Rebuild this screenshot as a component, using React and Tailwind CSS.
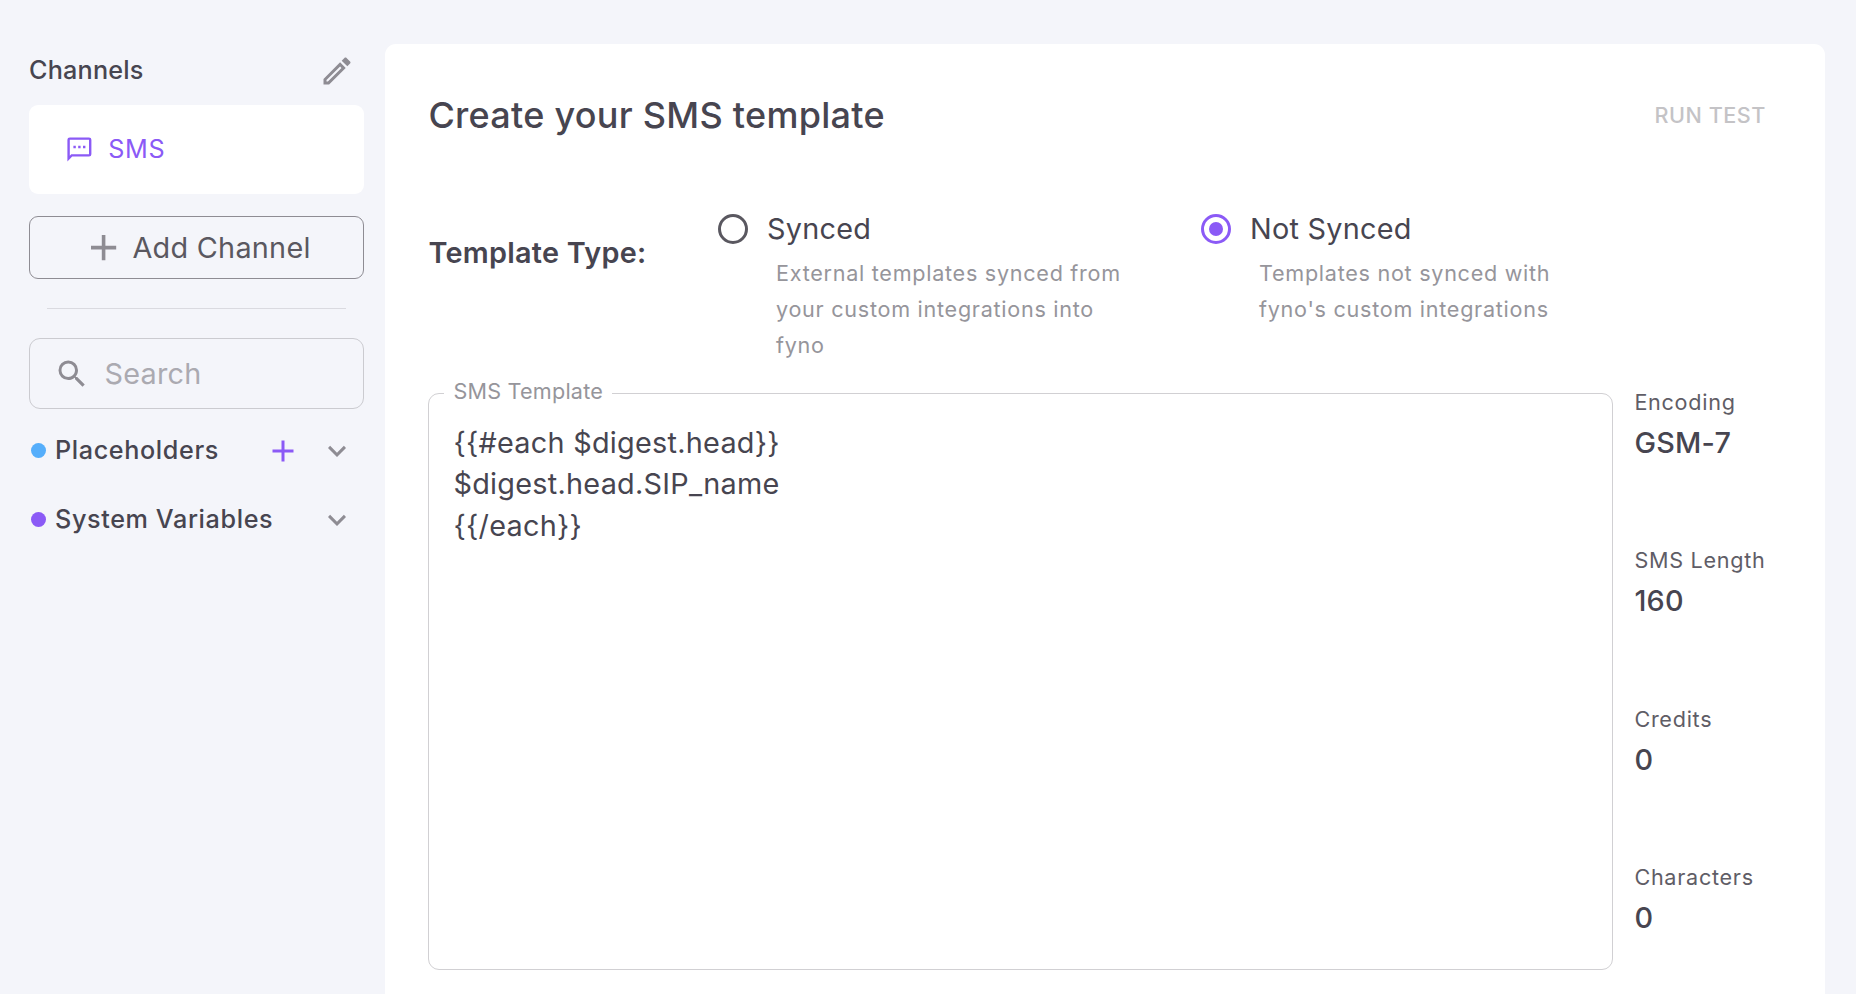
const ICONS = {
  pencil:
    "M14.06,9L15,9.94L5.92,19H5V18.08L14.06,9M17.66,3C17.41,3 17.15,3.1 16.96,3.29L15.13,5.12L18.88,8.87L20.71,7.04C21.1,6.65 21.1,6 20.71,5.63L18.37,3.29C18.17,3.09 17.92,3 17.66,3M14.06,6.19L3,17.25V21H6.75L17.81,9.94L14.06,6.19Z",
  sms: "M20,2H4A2,2 0 0,0 2,4V22L6,18H20A2,2 0 0,0 22,16V4A2,2 0 0,0 20,2M20,16H5.2L4,17.2V4H20V16M17,11H15V9H17M13,11H11V9H13M9,11H7V9H9",
  plus: "M19,13H13V19H11V13H5V11H11V5H13V11H19V13Z",
  search:
    "M9.5,3A6.5,6.5 0 0,1 16,9.5C16,11.11 15.41,12.59 14.44,13.73L14.71,14H15.5L20.5,19L19,20.5L14,15.5V14.71L13.73,14.44C12.59,15.41 11.11,16 9.5,16A6.5,6.5 0 0,1 3,9.5A6.5,6.5 0 0,1 9.5,3M9.5,5C7,5 5,7 5,9.5C5,12 7,14 9.5,14C12,14 14,12 14,9.5C14,7 12,5 9.5,5Z",
  chevron: "M7.41,8.58L12,13.17L16.59,8.58L18,10L12,16L6,10L7.41,8.58Z",
};

const METRICS = [
  ["Encoding", "GSM-7"],
  ["SMS Length", "160"],
  ["Credits", "0"],
  ["Characters", "0"],
];

const MESSAGE = "{{#each $digest.head}}\n$digest.head.SIP_name\n{{/each}}";

function Icon({ name, className }) {
  return (
    <svg viewBox="0 0 24 24" fill="currentColor" className={`shrink-0 ${className}`} aria-hidden="true">
      <path d={ICONS[name]} />
    </svg>
  );
}

function VariableGroup({ label, dot, canAdd }) {
  return (
    <div className="flex h-[69px] items-center pr-[9px] pl-[2px]">
      <span className={`size-[15px] shrink-0 rounded-full ${dot}`} />
      <span className="ml-[9px] flex-1 pb-[2px] text-[25.2px] leading-9 font-medium tracking-[0.62px] whitespace-nowrap text-[#474550]">
        {label}
      </span>
      {canAdd && <Icon name="plus" className="mr-[18px] size-9 text-[#8B5AF6]" />}
      <Icon name="chevron" className="size-9 text-[#8E8C93]" />
    </div>
  );
}

function Sidebar() {
  return (
    <aside className="flex w-[385px] shrink-0 flex-col pt-[53px] pr-[21px] pl-[29px]">
      <div className="flex h-9 items-center justify-between pr-[9px]">
        <h2 className="pb-[3px] text-[25.2px] leading-8 font-medium tracking-[0.2px] text-[#474550]">Channels</h2>
        <Icon name="pencil" className="size-9 text-[#8E8C93]" />
      </div>

      <div className="mt-4 flex h-[89px] items-center gap-[14.4px] rounded-[9px] bg-white pl-9 text-[#8B5AF6]">
        <Icon name="sms" className="size-[28.8px]" />
        <span className="pb-[2px] text-[25.2px] leading-9 tracking-[0.72px]">SMS</span>
      </div>

      <button className="mt-[22px] flex h-[63px] items-center justify-center gap-[7px] rounded-[9px] border border-[#8E8C93]">
        <Icon name="plus" className="size-[43.2px] text-[#8E8C93]" />
        <span className="text-[28.8px] leading-10 tracking-[0.27px] text-[#5A5860]">Add Channel</span>
      </button>

      <div className="mx-[18px] mt-[29px] h-px shrink-0 bg-[#DADAE0]" />

      <div className="mt-[29px] flex h-[71px] items-center gap-[14.4px] rounded-[11px] border border-[#CBCBD0] pl-6">
        <Icon name="search" className="size-9 text-[#8E8C93]" />
        <span className="text-[28.8px] leading-10 tracking-[0.27px] text-[#ABAAB1]">Search</span>
      </div>

      <div className="mt-[7px]">
        <VariableGroup label="Placeholders" dot="bg-[#55AEFB]" canAdd />
        <VariableGroup label="System Variables" dot="bg-[#8B5AF6]" />
      </div>
    </aside>
  );
}

function RadioOption({ label, description, checked }) {
  return (
    <div className="w-[483px]">
      <label className="flex h-9 items-center gap-[19px]">
        <span
          className={`flex size-[30px] items-center justify-center rounded-full border-[3px] ${
            checked ? "border-[#8B5AF6]" : "border-[#5A5860]"
          }`}
        >
          {checked && <span className="size-[14px] rounded-full bg-[#8B5AF6]" />}
        </span>
        <span className="text-[28.8px] leading-9 tracking-[0.27px] text-[#474550]">{label}</span>
      </label>
      <p className="mt-2 ml-[58px] w-[352px] text-[21.6px] leading-9 tracking-[0.72px] text-[#96959B]">{description}</p>
    </div>
  );
}

export default function App() {
  return (
    <div className="flex h-[994px] w-[1856px] overflow-hidden bg-[#F4F5FA] font-[Inter,sans-serif]">
      <Sidebar />

      <main className="mt-11 h-[950px] w-[1440px] rounded-t-[11px] bg-white pl-[43px]">
        <header className="flex h-[142px] items-center justify-between pr-[59px] pl-[0.4px]">
          <h1 className="text-[36px] leading-[58px] font-medium tracking-[0.27px] text-[#474550]">
            Create your SMS template
          </h1>
          <button className="text-[21.6px] leading-9 font-medium tracking-[0.54px] text-[#C4C3C6]">RUN TEST</button>
        </header>

        <section className="flex h-[207px] pt-[25px]">
          <h2 className="w-[290px] shrink-0 pt-[21px] pl-[0.4px] text-[28.8px] leading-[42px] font-semibold tracking-[0.27px] text-[#474550]">
            Template Type:
          </h2>
          <RadioOption label="Synced" description="External templates synced from your custom integrations into fyno" />
          <RadioOption label="Not Synced" description="Templates not synced with fyno's custom integrations" checked />
        </section>

        <section className="flex gap-[21.4px]">
          <div className="relative h-[577px] w-[1185px] rounded-[11px] border border-[#D1D0D3]">
            <label className="absolute -top-[15px] left-[15px] w-[168px] bg-white pl-[9.4px] text-[21.6px] leading-6 tracking-[0.22px] text-[#96959B]">
              SMS Template
            </label>
            <textarea
              className="block h-full w-full resize-none overflow-hidden bg-transparent px-[24.4px] pt-[27.5px] text-[28.8px] leading-[41.6px] tracking-[0.27px] text-[#474550] outline-none"
              defaultValue={MESSAGE}
            />
          </div>

          <dl className="-mt-[9px] flex flex-col gap-[78.1px]">
            {METRICS.map(([name, value]) => (
              <div key={name} className="h-[80.2px]">
                <dt className="text-[21.6px] leading-9 tracking-[0.72px] text-[#5F5D66]">{name}</dt>
                <dd className="text-[28.8px] leading-[45.8px] font-medium tracking-[0.27px] text-[#474550]">{value}</dd>
              </div>
            ))}
          </dl>
        </section>
      </main>
    </div>
  );
}
